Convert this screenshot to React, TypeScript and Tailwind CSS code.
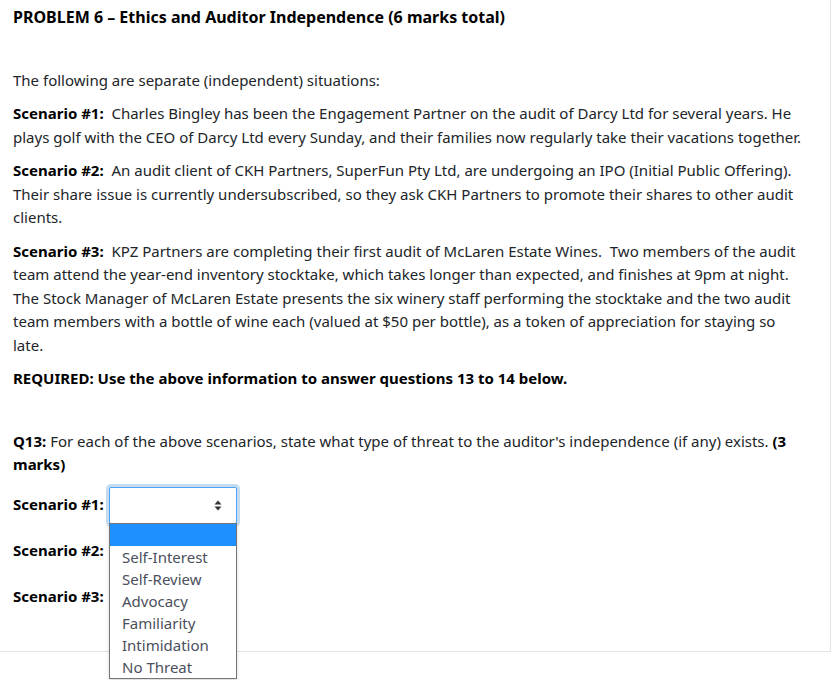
const threats = ["Self-Interest", "Self-Review", "Advocacy", "Familiarity", "Intimidation", "No Threat"];

function Arrows() {
  return (
    <svg width="8" height="11" viewBox="0 0 8 11" className="fill-[#333]">
      <path d="M4 0.5 L7.5 4.5 L0.5 4.5 Z" />
      <path d="M4 10.5 L7.5 6.5 L0.5 6.5 Z" />
    </svg>
  );
}

function ScenarioSelect({ label, open }: { label: string; open?: boolean }) {
  return (
    <div className="flex items-center h-[37px] mb-[9px]">
      <span className="font-bold text-black w-[96px] shrink-0">{label}</span>
      <div className="relative">
        {open ? (
          <>
            <div className="w-[128px] h-[37px] border border-[#4da3f5] bg-white rounded-[2px] shadow-[0_0_0_3px_#c5dcf0] flex items-center justify-end pr-[14px]">
              <Arrows />
            </div>
            <div className="absolute left-0 top-[36px] z-10 w-[128px] bg-white border border-[#767676] shadow-[0_2px_4px_rgba(0,0,0,0.15)]">
              <div className="h-[22px] bg-[#1e90ff]" />
              {threats.map((t) => (
                <div key={t} className="h-[22px] leading-[22px] pl-[12px] text-[15px] text-[#4a4f5c]">
                  {t}
                </div>
              ))}
            </div>
          </>
        ) : (
          <div className="w-[128px] h-[37px] border border-[#ced4da] bg-white rounded-[2px]" />
        )}
      </div>
    </div>
  );
}

export default function App() {
  return (
    <div className="h-[680px] bg-white" style={{ fontFamily: "'Noto Sans', 'Open Sans', sans-serif" }}>
      <div className="w-[831px] h-[652px] border-r border-b border-[#e3e3e3] pl-[13px] pr-[25px] pt-[6px] text-[15px] leading-[23.5px] text-[#212529]">
        <p className="font-bold text-black text-[16px] mb-[39px]">PROBLEM 6 – Ethics and Auditor Independence (6 marks total)</p>

        <p className="mb-[10px]">The following are separate (independent) situations:</p>

        <p className="mb-[10px]">
          <b className="text-black">Scenario #1:</b>&nbsp; Charles Bingley has been the Engagement Partner on the audit of Darcy Ltd for
          several years. He plays golf with the CEO of Darcy Ltd every Sunday, and their families now regularly take their
          vacations together.
        </p>

        <p className="mb-[10px]">
          <b className="text-black">Scenario #2:</b>&nbsp; An audit client of CKH Partners, SuperFun Pty Ltd, are undergoing an IPO
          (Initial Public Offering). Their share issue is currently undersubscribed, so they ask CKH Partners to promote their
          shares to other audit clients.
        </p>

        <p className="mb-[10px]">
          <b className="text-black">Scenario #3:</b>&nbsp; KPZ Partners are completing their first audit of McLaren Estate Wines.&nbsp;
          Two members of the audit team attend the year-end inventory stocktake, which takes longer than expected, and
          finishes at 9pm at night. The Stock Manager of McLaren Estate presents the six winery staff performing the
          stocktake and the two audit team members with a bottle of wine each (valued at $50 per bottle), as a token of
          appreciation for staying so late.
        </p>

        <p className="font-bold text-black mb-[39px]">REQUIRED: Use the above information to answer questions 13 to 14 below.</p>

        <p className="mb-[10px]">
          <b className="text-black">Q13:</b> For each of the above scenarios, state what type of threat to the auditor's
          independence (if any) exists. <b className="text-black">(3 marks)</b>
        </p>

        <ScenarioSelect label="Scenario #1:" open />
        <ScenarioSelect label="Scenario #2:" />
        <ScenarioSelect label="Scenario #3:" />
      </div>
    </div>
  );
}
